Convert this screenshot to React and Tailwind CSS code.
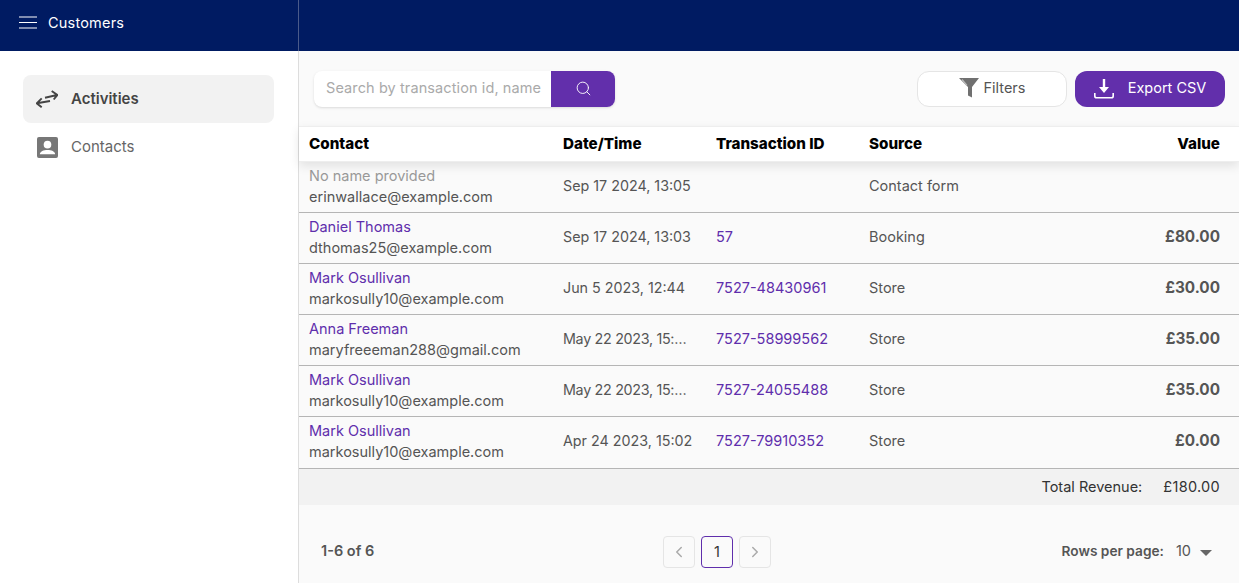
import React from "react";
import { ChevronLeft, ChevronRight, Search } from "lucide-react";

const rows = [
  { name: "No name provided", muted: true, email: "erinwallace@example.com", date: "Sep 17 2024, 13:05", id: "", source: "Contact form", value: "" },
  { name: "Daniel Thomas", email: "dthomas25@example.com", date: "Sep 17 2024, 13:03", id: "57", source: "Booking", value: "£80.00" },
  { name: "Mark Osullivan", email: "markosully10@example.com", date: "Jun 5 2023, 12:44", id: "7527-48430961", source: "Store", value: "£30.00" },
  { name: "Anna Freeman", email: "maryfreeeman288@gmail.com", date: "May 22 2023, 15:…", cut: true, id: "7527-58999562", source: "Store", value: "£35.00" },
  { name: "Mark Osullivan", email: "markosully10@example.com", date: "May 22 2023, 15:…", cut: true, id: "7527-24055488", source: "Store", value: "£35.00" },
  { name: "Mark Osullivan", email: "markosully10@example.com", date: "Apr 24 2023, 15:02", id: "7527-79910352", source: "Store", value: "£0.00", last: true },
];

function Row({ row }) {
  return (
    <div className={`flex shrink-0 items-center border-b border-[#b5b5b5] text-[14.5px] text-[#555] ${row.last ? "h-[52px] pb-[3px]" : "h-[51px] pb-[2px]"}`}>
      <div className="w-[264px] pl-[10px] leading-[21px]">
        <div className={row.muted ? "text-[#999]" : "text-[#5f2eac]"}>{row.name}</div>
        <div className="whitespace-nowrap">{row.email}</div>
      </div>
      <div className={`w-[153px] text-[14.3px] ${row.cut ? "tracking-[-0.3px]" : ""}`}>{row.date}</div>
      <div className="w-[153px] text-[#5f2eac]">{row.id}</div>
      <div className="w-[200px]">{row.source}</div>
      <div className="flex-1 pr-[19px] pt-px text-right text-[15.3px] font-bold">{row.value}</div>
    </div>
  );
}

export default function App() {
  return (
    <div className="flex h-[583px] w-[1239px] flex-col overflow-hidden bg-white font-['Inter',sans-serif]">
      <header className="flex h-[51px] shrink-0 bg-[#001b62]">
        <div className="flex w-[299px] items-center gap-[11px] border-r border-[#4a5a8a] pb-[6px] pl-[19px] text-[14.5px] tracking-[0.2px] text-white">
          <svg width="18" height="13" viewBox="0 0 18 13" stroke="currentColor" strokeWidth="1.2">
            <path d="M0 1h18M0 6.500h18M0 12h18" />
          </svg>
          Customers
        </div>
      </header>
      <div className="flex min-h-0 flex-1">
        <aside className="w-[299px] shrink-0 border-r border-[#ddd] px-[23px] pt-6">
          <div className="flex h-12 w-[251px] items-center gap-[13px] rounded-lg bg-[#f2f2f2] pl-[13px] text-[15px] font-semibold text-[#444]">
            <svg width="22" height="18" viewBox="0 0 22 18" fill="none" stroke="#444" strokeWidth="1.9">
              <path d="M9 7.700L21 5M15.700 1l5.600 4-3.600 4.500M14 11L1 13.300M5.700 8.300l-5 5 5 4" />
            </svg>
            <span className="pt-px">Activities</span>
          </div>
          <div className="flex h-12 items-center gap-[13px] pl-[14px] text-[15px] text-[#666]">
            <svg width="21" height="21" viewBox="0 0 22 22">
              <rect width="22" height="22" rx="2" fill="#777" />
              <circle cx="11" cy="8" r="4" fill="#fff" />
              <path d="M3 18c0-3 4-4.500 8-4.500s8 1.500 8 4.500z" fill="#fff" />
            </svg>
            <span className="pt-px">Contacts</span>
          </div>
        </aside>
        <main className="flex min-w-0 flex-1 flex-col bg-[#fafafa]">
          <div className="flex h-[75px] shrink-0 items-center justify-between pl-[15px] pr-[14px]">
            <div className="flex h-9 w-[301px] overflow-hidden rounded-lg bg-white shadow-sm">
              <div className="flex-1 truncate pb-[2px] pl-3 text-[14.5px] leading-[34px] tracking-[0.1px] text-[#aaa]">Search by transaction id, name</div>
              <div className="flex w-16 shrink-0 items-center justify-center bg-[#622fab]">
                <Search size={17} color="#fff" strokeWidth={1.3} />
              </div>
            </div>
            <div className="flex gap-2">
              <div className="flex h-9 w-[150px] items-center justify-center gap-[5px] rounded-xl border border-[#e5e5e5] bg-white pb-[2px] text-[14.5px] text-[#555]">
                <svg width="20" height="20" viewBox="0 0 20 20">
                  <path d="M0 0h20l-7 9v10.500l-4-2V9z" fill="#707070" />
                  <path d="M3 1.500l5 6" stroke="#bbb" strokeWidth="1.200" />
                </svg>
                Filters
              </div>
              <div className="flex h-9 w-[150px] items-center justify-center gap-[14px] rounded-xl bg-[#622fab] pb-[2px] text-[14.5px] text-white">
                <svg width="20" height="20" viewBox="0 0 20 20" className="mt-[2px]">
                  <path d="M8.800 0h2.400v8h3.800L10 14 5 8h3.800z" fill="#fff" />
                  <path d="M0.800 14v3c0 1.200.7 1.800 1.800 1.800h14.800c1.100 0 1.800-.6 1.800-1.800v-3" fill="none" stroke="#fff" strokeWidth="1.600" />
                </svg>
                Export CSV
              </div>
            </div>
          </div>
          <div className="relative z-10 flex h-[36px] shrink-0 items-center border-y border-[#eee] bg-white pt-px text-[15.2px] font-extrabold text-black shadow-[0_4px_10px_rgba(0,0,0,0.1)]">
            <div className="w-[264px] pl-[10px]">Contact</div>
            <div className="w-[153px]">Date/Time</div>
            <div className="w-[153px]">Transaction ID</div>
            <div className="w-[200px]">Source</div>
            <div className="flex-1 pr-[19px] text-right">Value</div>
          </div>
          {rows.map((row, i) => (
            <Row key={i} row={row} />
          ))}
          <div className="flex h-[36px] shrink-0 items-center justify-end gap-[21px] bg-[#f2f2f2] pr-[19px] text-[14.5px] text-[#333]">
            <span>Total Revenue:</span>
            <span className="tracking-[0.3px]">£180.00</span>
          </div>
          <div className="flex h-[92px] shrink-0 items-center justify-between pl-[22px] pr-[27px] text-[14.5px] text-[#555]">
            <span className="font-semibold">1-6 of 6</span>
            <div className="mr-[2px] mt-[2px] flex items-center gap-[6px]">
              <div className="flex h-8 w-8 items-center justify-center rounded border border-[#e5e5e5] text-[#aaa]">
                <ChevronLeft size={18} />
              </div>
              <div className="flex h-8 w-8 items-center justify-center rounded border border-[#5f2eac] text-[#333]">1</div>
              <div className="flex h-8 w-8 items-center justify-center rounded border border-[#e5e5e5] text-[#aaa]">
                <ChevronRight size={18} />
              </div>
            </div>
            <div className="flex items-center">
              <span className="text-[13.7px] font-semibold">Rows per page:</span>
              <span className="ml-3">10</span>
              <span className="ml-[9px] mt-[3px] h-0 w-0 border-x-[6px] border-t-[6px] border-x-transparent border-t-[#666]" />
            </div>
          </div>
        </main>
      </div>
    </div>
  );
}
